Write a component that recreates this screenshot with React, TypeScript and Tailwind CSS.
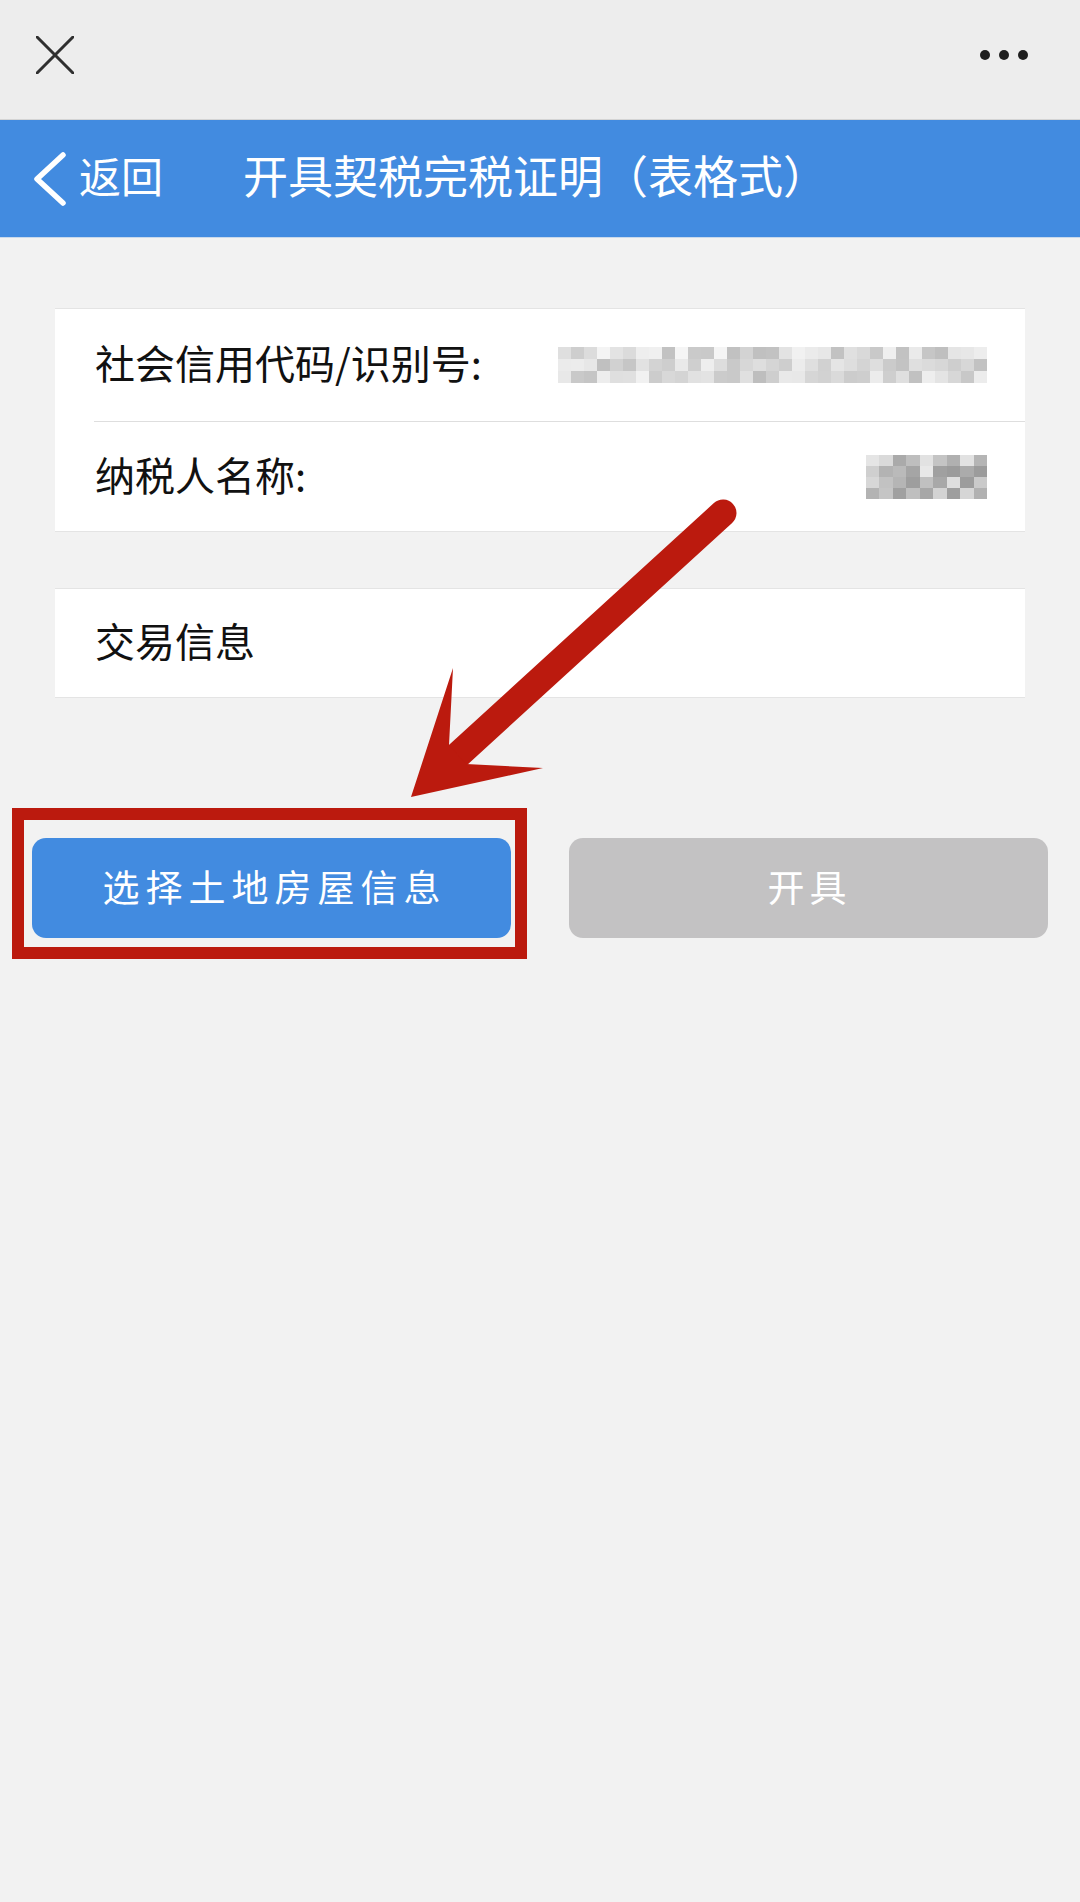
import React from 'react';

const font = { fontFamily: '"Noto Sans CJK SC", "Noto Sans", sans-serif' };

// small deterministic mosaic used for the blurred-out values
const mosaic = (cols: number, rows: number, seed: number, min: number, max: number) => {
  let s = seed;
  const cells: string[] = [];
  for (let i = 0; i < cols * rows; i++) {
    s = (s * 1103515245 + 12345) % 2147483648;
    const v = Math.round(min + ((s / 2147483648) * (max - min)));
    cells.push(`rgb(${v},${v},${v})`);
  }
  return cells;
};

const Mosaic = ({ cols, rows, seed, min, max, cw, ch }: { cols: number; rows: number; seed: number; min: number; max: number; cw: number; ch: number }) => {
  const cells = mosaic(cols, rows, seed, min, max);
  return (
    <div className="flex flex-wrap" style={{ width: cols * cw }}>
      {cells.map((c, i) => (
        <div key={i} style={{ width: cw, height: ch, backgroundColor: c }} />
      ))}
    </div>
  );
};

const App = () => {
  return (
    <div className="relative w-[1080px] min-h-[1902px] bg-[#f2f2f2]" style={font}>
      {/* top window bar */}
      <div className="h-[120px] bg-[#ededed] border-b border-[#d4d4d4] flex items-start justify-between pl-[36px] pr-[52px]">
        <svg className="mt-[36px]" width="38" height="38" viewBox="0 0 38 38">
          <path d="M1 1 L37 37 M37 1 L1 37" stroke="#2f2f2f" strokeWidth="3" strokeLinecap="round" />
        </svg>
        <div className="mt-[50px] flex gap-[9px]">
          <span className="w-[10px] h-[10px] rounded-full bg-[#1f1f1f]" />
          <span className="w-[10px] h-[10px] rounded-full bg-[#1f1f1f]" />
          <span className="w-[10px] h-[10px] rounded-full bg-[#1f1f1f]" />
        </div>
      </div>

      {/* blue header */}
      <div className="h-[118px] bg-[#428be0] flex items-center text-white border-b border-[#c9d9ec]">
        <svg className="ml-[33px]" width="34" height="54" viewBox="0 0 34 54">
          <path d="M30 3 L4 27 L30 51" fill="none" stroke="#fff" strokeWidth="5.5" strokeLinecap="round" strokeLinejoin="round" />
        </svg>
        <span className="ml-[12px] text-[42px] leading-none -translate-y-[4px]">返回</span>
        <span className="ml-[80px] text-[45px] leading-none -translate-y-[4px]">开具契税完税证明（表格式）</span>
      </div>

      {/* info cards */}
      <div className="px-[55px] pt-[70px]">
        <div className="bg-white border-y border-[#e4e4e4]">
          <div className="h-[112px] flex items-center justify-between pl-[40px] pr-[38px]">
            <span className="text-[40px] text-[#111] leading-none -translate-y-[3px]">社会信用代码/识别号:</span>
            <Mosaic cols={33} rows={3} seed={7} min={190} max={245} cw={13} ch={12} />
          </div>
          <div className="ml-[39px] border-t border-[#dedede]" />
          <div className="h-[109px] flex items-center justify-between pl-[40px] pr-[38px]">
            <span className="text-[40px] text-[#111] leading-none -translate-y-[3px]">纳税人名称:</span>
            <Mosaic cols={9} rows={4} seed={31} min={155} max={235} cw={13.5} ch={11} />
          </div>
        </div>

        <div className="mt-[56px] bg-white border-y border-[#e4e4e4] h-[110px] flex items-center pl-[40px]">
          <span className="text-[40px] text-[#111] leading-none -translate-y-[3px]">交易信息</span>
        </div>
      </div>

      {/* buttons */}
      <div className="px-[32px] mt-[140px] grid grid-cols-2 gap-[58px]">
        <button className="h-[100px] rounded-[14px] bg-[#428be0] text-white text-[37px] leading-none tracking-[6px] pl-[6px] pb-[4px]">
          选择土地房屋信息
        </button>
        <button className="h-[100px] rounded-[14px] bg-[#c3c2c3] text-white text-[37px] leading-none tracking-[5px] pl-[2px] pb-[4px]">
          开具
        </button>
      </div>

      {/* annotation: red frame */}
      <div className="absolute left-[12px] top-[808px] w-[515px] h-[151px] border-[12px] border-[#bb1a0e] pointer-events-none" />

      {/* annotation: red arrow */}
      <svg className="absolute left-0 top-0 pointer-events-none" width="1080" height="1902" viewBox="0 0 1080 1902">
        <line x1="723" y1="513" x2="458" y2="755" stroke="#bb1a0e" strokeWidth="27" strokeLinecap="round" />
        <polygon points="411,797 453,668 449,745 466,764 543,768" fill="#bb1a0e" />
      </svg>
    </div>
  );
};

export default App;
